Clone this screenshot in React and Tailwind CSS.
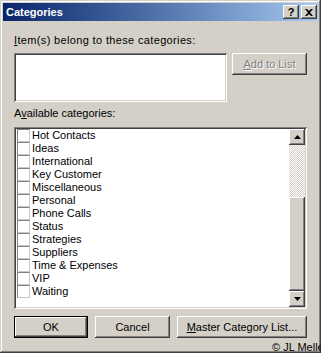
import React from "react";

const raised =
  "bg-[#d4d0c8] shadow-[inset_-1px_-1px_#404040,inset_1px_1px_#ffffff,inset_-2px_-2px_#808080,inset_2px_2px_#d4d0c8]";
const sunken =
  "shadow-[inset_1px_1px_#808080,inset_-1px_-1px_#ffffff,inset_2px_2px_#404040,inset_-2px_-2px_#d4d0c8]";

const items = [
  "Hot Contacts",
  "Ideas",
  "International",
  "Key Customer",
  "Miscellaneous",
  "Personal",
  "Phone Calls",
  "Status",
  "Strategies",
  "Suppliers",
  "Time & Expenses",
  "VIP",
  "Waiting",
];

function Arrow({ down }) {
  return (
    <svg width="7" height="4" viewBox="0 0 7 4">
      {down ? (
        <polygon points="0,0 7,0 3.5,4" fill="#000" />
      ) : (
        <polygon points="3.5,0 7,4 0,4" fill="#000" />
      )}
    </svg>
  );
}

export default function App() {
  return (
    <div
      className="relative w-[321px] h-[353px] overflow-hidden bg-[#d4d0c8] p-[3px] text-[11px] leading-[13px] text-black shadow-[inset_-1px_-1px_#404040,inset_1px_1px_#d4d0c8,inset_-2px_-2px_#808080,inset_2px_2px_#ffffff]"
      style={{ fontFamily: '"Liberation Sans", Arial, sans-serif' }}
    >
      {/* Title bar */}
      <div className="flex h-[18px] items-center bg-gradient-to-r from-[#0a246a] to-[#a6caf0] pl-[3px] pr-[1px]">
        <span className="flex-1 font-bold text-white">Categories</span>
        <div className="flex gap-[2px]">
          <div className={`${raised} flex h-[14px] w-[16px] items-center justify-center`}>
            <span className="text-[11px] font-bold leading-[11px]">?</span>
          </div>
          <div className={`${raised} flex h-[14px] w-[16px] items-center justify-center`}>
            <svg width="8" height="7" viewBox="0 0 8 7">
              <path d="M0 0h2l2 2 2-2h2L5 3.5 8 7H6L4 5 2 7H0l3-3.5z" fill="#000" />
            </svg>
          </div>
        </div>
      </div>

      {/* Body */}
      <div className="flex flex-col px-[11px]">
        <div className="mt-[13px] h-[13px] tracking-[0.35px]">
          <span className="underline">I</span>tem(s) belong to these categories:
        </div>
        <div className="mt-[6px] flex items-start">
          <div className={`h-[49px] w-[213px] bg-white ${sunken}`} />
          <div className={`${raised} ml-[5px] flex h-[22px] w-[75px] items-center justify-center text-[#808080] [text-shadow:1px_1px_#ffffff]`}>
            <span>
              <span className="underline">A</span>dd to List
            </span>
          </div>
        </div>

        <div className="mt-[5px] h-[13px]">
          A<span className="underline">v</span>ailable categories:
        </div>

        <div className={`mt-[7px] flex h-[182px] bg-white p-[2px] ${sunken}`}>
          <div className="flex flex-1 flex-col">
            {items.map((it) => (
              <div key={it} className="flex h-[13px] items-center">
                <div className="ml-[1px] h-[13px] w-[13px] border-t border-l border-r border-b border-t-[#808080] border-l-[#808080] border-r-[#c8c8c8] border-b-[#c8c8c8] bg-white" />
                <span className="ml-[2px] whitespace-nowrap">{it}</span>
              </div>
            ))}
          </div>
          <div className="flex w-[16px] flex-col">
            <div className={`${raised} flex h-[16px] items-center justify-center`}>
              <Arrow />
            </div>
            <div className="h-[52px] bg-[repeating-conic-gradient(#d4d0c8_0_25%,#ffffff_0_50%)] bg-[length:2px_2px]" />
            <div className={`${raised} flex-1`} />
            <div className={`${raised} flex h-[16px] items-center justify-center`}>
              <Arrow down />
            </div>
          </div>
        </div>

        <div className="mt-[7px] flex gap-[7px]">
          <div className="h-[22px] w-[74px] border border-black">
            <div className={`${raised} flex h-full w-full items-center justify-center`}>OK</div>
          </div>
          <div className={`${raised} flex h-[22px] w-[75px] items-center justify-center`}>Cancel</div>
          <div className={`${raised} flex h-[22px] w-[130px] items-center justify-center`}>
            <span>
              <span className="underline">M</span>aster Category List...
            </span>
          </div>
        </div>
      </div>

      <div className="absolute left-[272px] top-[341px] whitespace-nowrap leading-[13px]">© JL Meller</div>
    </div>
  );
}
